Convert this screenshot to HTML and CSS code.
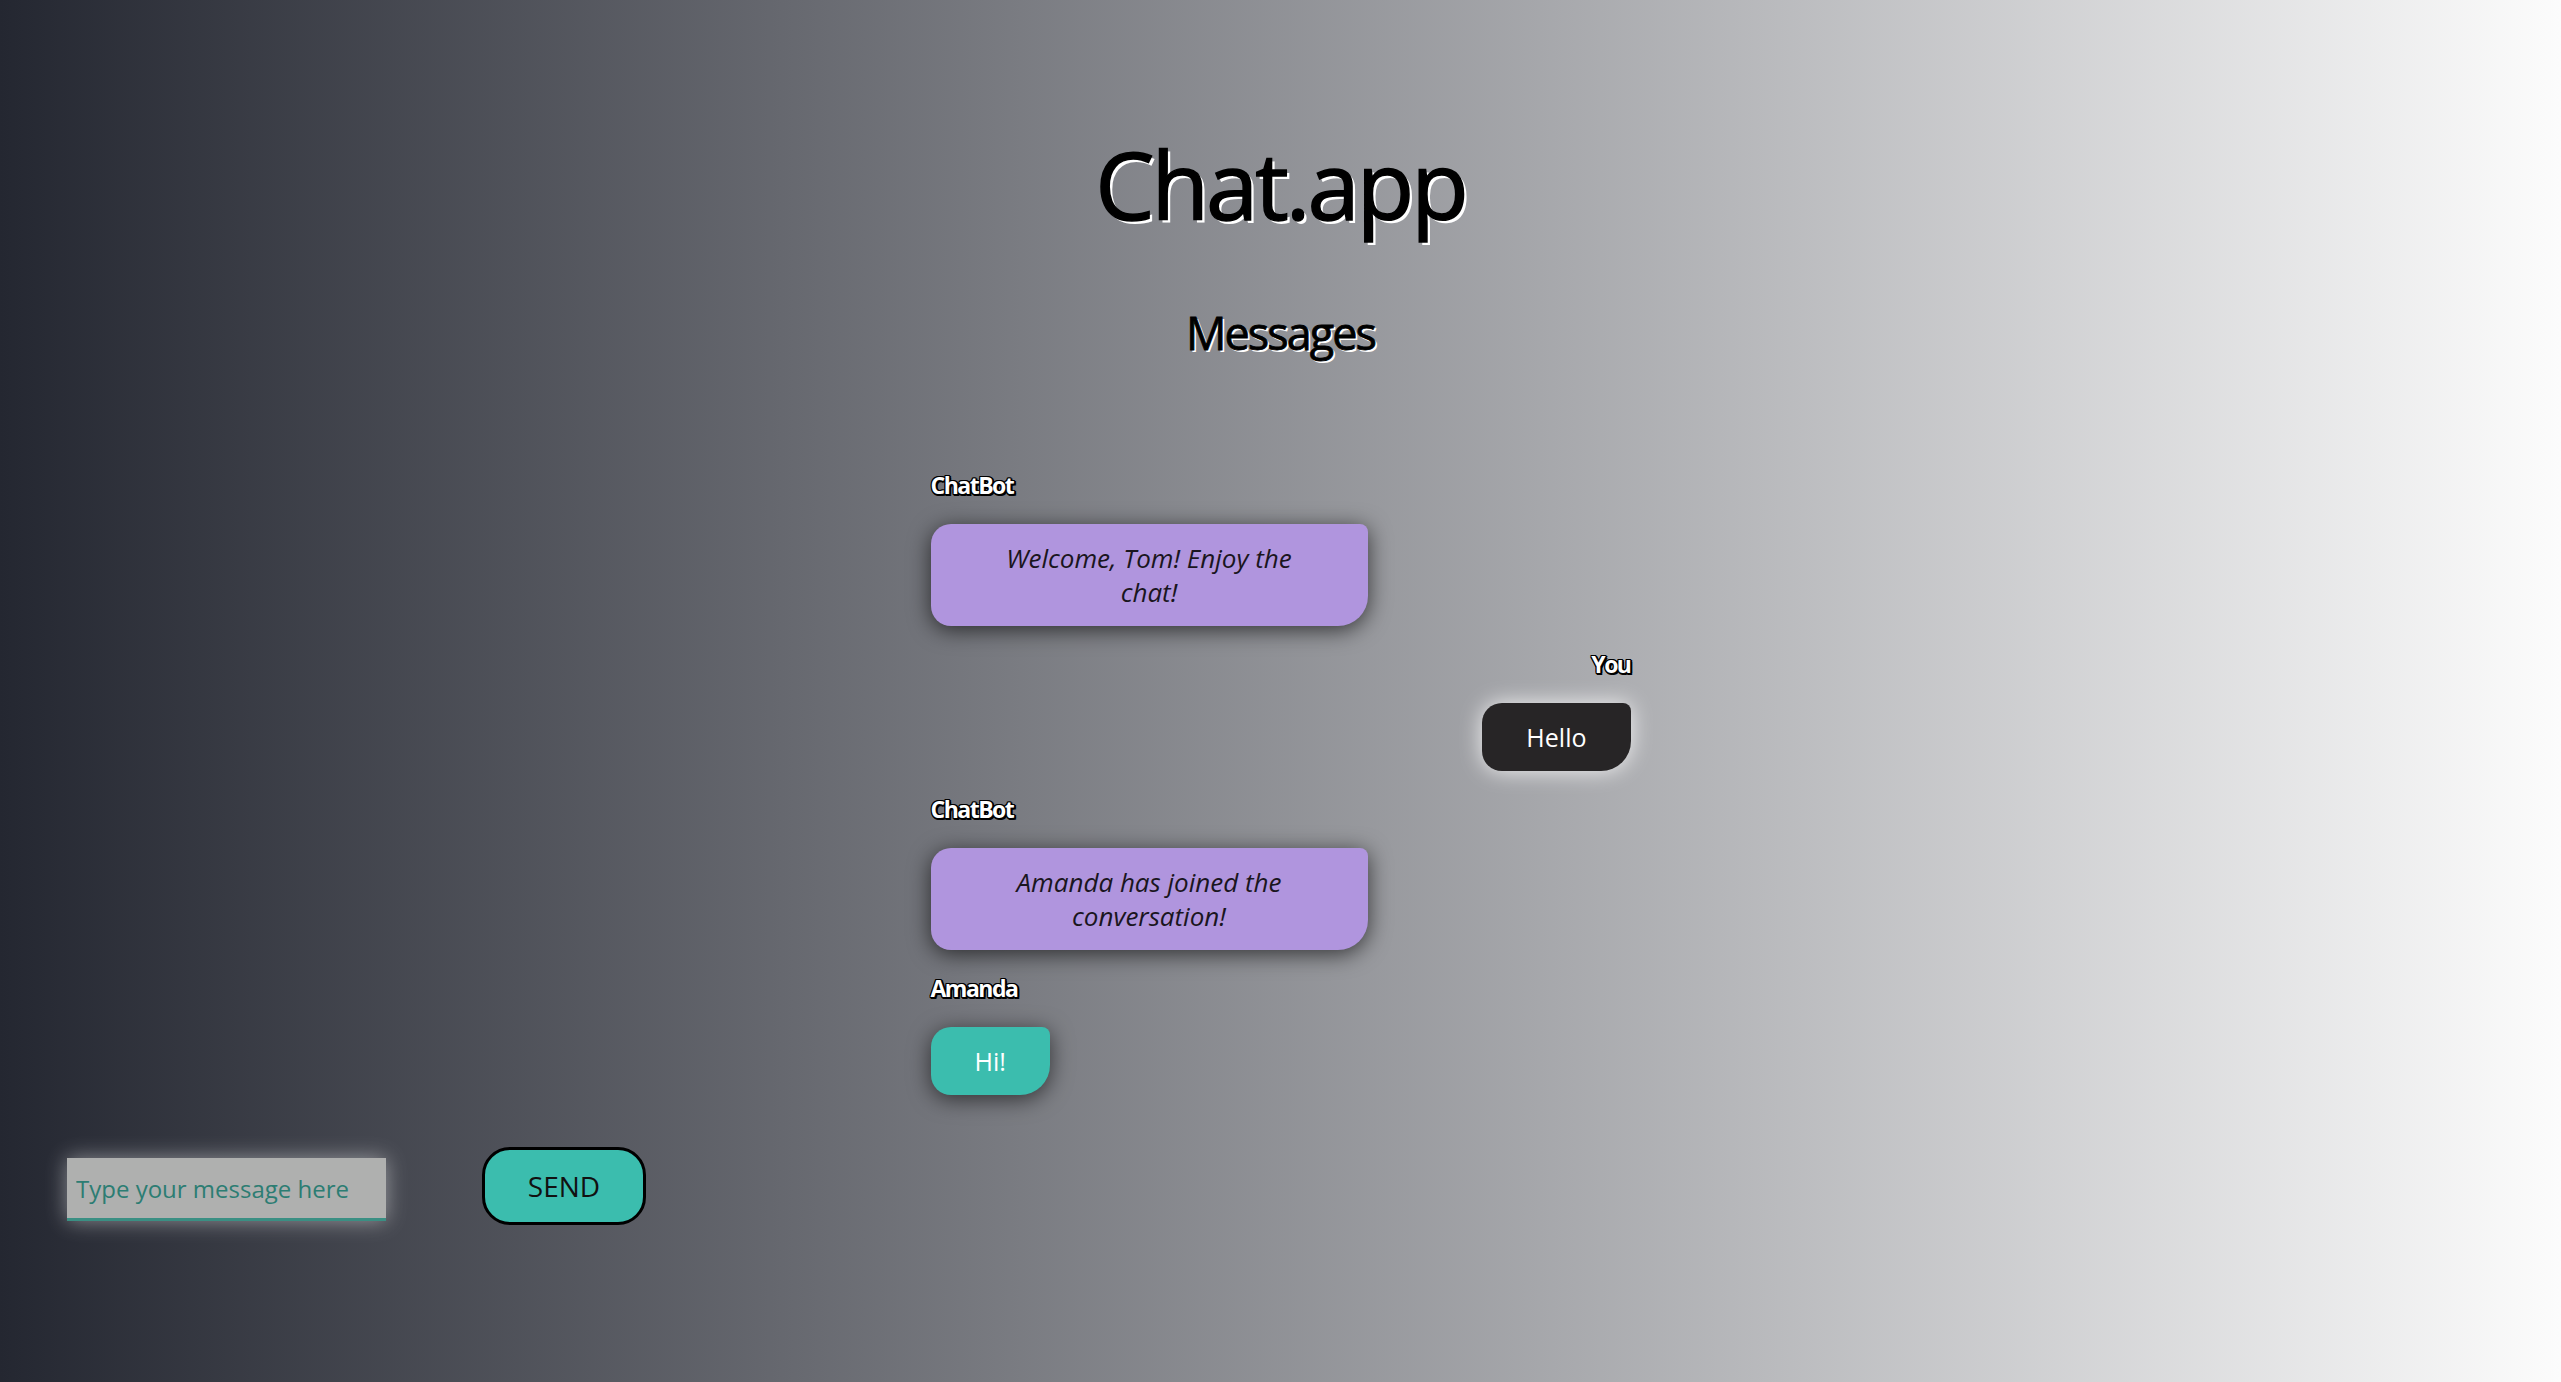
FILE: index.html
```html
<!DOCTYPE html>
<html lang="en">
  <head>
    <meta charset="utf-8" />
    <title>Chat.app</title>
    <link rel="stylesheet" href="styles.css">
  </head>
  <body>
    <header class="header">
      <h1 class="title">Chat.app</h1>
      <h2 class="subtitle">Messages</h2>
    </header>

    <div id="messages" class="messages">
      <div class="message bot">
        <div class="author">ChatBot</div>
        <div class="bubble">Welcome, Tom! Enjoy the chat!</div>
      </div>
      <div class="message own">
        <div class="author">You</div>
        <div class="bubble">Hello</div>
      </div>
      <div class="message bot">
        <div class="author">ChatBot</div>
        <div class="bubble">Amanda has joined the conversation!</div>
      </div>
      <div class="message other">
        <div class="author">Amanda</div>
        <div class="bubble">Hi!</div>
      </div>
    </div>

    <form class="send-form" onsubmit="return false">
      <input class="send-input" type="text" placeholder="Type your message here" />
      <button class="send-button" type="submit">SEND</button>
    </form>
  </body>
</html>
```

FILE: styles.css
```css
html {
  height: 100%;
}

body {
  margin: 0;
  min-height: 100%;
  background: linear-gradient(to right, #242731 0%, #fcfcfc 100%);
  font-family: "Open Sans", "Noto Sans", sans-serif;
  color: #000;
}

.header {
  padding-top: 119px;
  text-align: center;
}

.title {
  margin: 0;
  font-size: 94px;
  font-weight: 400;
  line-height: 131px;
  letter-spacing: -3px;
  -webkit-text-stroke: 1.5px #000;
  text-shadow: 3px 3px 0 #fff;
}

.subtitle {
  margin: 52px 0 0;
  font-size: 45px;
  font-weight: 400;
  line-height: 61px;
  letter-spacing: -2px;
  -webkit-text-stroke: 0.8px #000;
  text-shadow: 2px 2px 0 #fff;
}

.messages {
  width: 700px;
  margin: 106px auto 0;
  display: flex;
  flex-direction: column;
  gap: 22px;
}

.message {
  display: flex;
  flex-direction: column;
  align-items: flex-start;
}

.message.own {
  align-items: flex-end;
}

.author {
  font-size: 23px;
  font-weight: 700;
  line-height: 33px;
  letter-spacing: -1.5px;
  color: #fff;
  margin-bottom: 22px;
  text-shadow: -1px -1px 0 #000, 1px -1px 0 #000, -1px 1px 0 #000, 1px 1px 0 #000,
    0 2px 0 #000, 0 -1px 0 #000, 2px 0 0 #000, -1px 0 0 #000, 2px 2px 0 #000;
}

.bubble {
  max-width: 437px;
  box-sizing: border-box;
  padding: 17px 44px;
  font-size: 25px;
  line-height: 34px;
  text-align: center;
  border-radius: 20px 8px 30px 20px;
}

.bot .bubble {
  width: 437px;
  padding: 17px 50px;
  background-color: #b095de;
  color: #1a1520;
  font-size: 26px;
  font-style: italic;
  box-shadow: 0 4px 22px rgba(0, 0, 0, 0.65);
}

.own .bubble {
  background-color: #272526;
  color: #fff;
  box-shadow: 0 0 22px rgba(255, 255, 255, 0.85);
}

.other .bubble {
  background-color: #3bbdae;
  color: #fff;
  box-shadow: 0 4px 22px rgba(0, 0, 0, 0.6);
}

.send-form {
  display: flex;
  align-items: center;
  gap: 96px;
  padding: 52px 67px 80px;
}

.send-input {
  width: 319px;
  height: 63px;
  box-sizing: border-box;
  margin-top: 7px;
  padding: 0 9px;
  border: none;
  border-bottom: 3px solid #3a8f83;
  background-color: #afb0af;
  font-family: "Open Sans", "Noto Sans", sans-serif;
  font-size: 24px;
  color: #2c7d73;
  outline: none;
  box-shadow: 0 0 20px rgba(255, 255, 255, 0.45);
}

.send-input::placeholder {
  color: #2c7d73;
}

.send-button {
  width: 164px;
  height: 78px;
  box-sizing: border-box;
  border: 3px solid #000;
  border-radius: 28px;
  background-color: #3bbdae;
  font-family: "Open Sans", "Noto Sans", sans-serif;
  font-size: 28px;
  color: #111;
  cursor: pointer;
}
```
